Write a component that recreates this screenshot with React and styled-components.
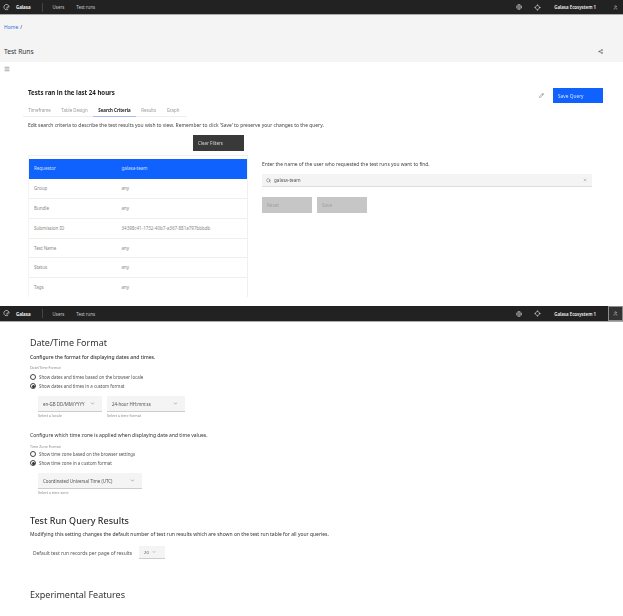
import React from "react";
import styled, { createGlobalStyle } from "styled-components";
import { Globe, Locate, User, Share2, Search, X, Pencil, Menu, ChevronDown } from "lucide-react";

const Global = createGlobalStyle`
  html, body { margin: 0; padding: 0; background: #fff; }
  body { font-family: "Noto Sans", "Open Sans", sans-serif; color: #161616; width: 623px; height: 616px; overflow: hidden; }
  * { box-sizing: border-box; }
`;

const Shot = styled.section`
  height: ${(p) => p.$h}px;
  overflow: hidden;
  display: flex;
  flex-direction: column;
  filter: blur(0.35px);
`;
const Header = styled.header`
  flex: none;
  height: ${(p) => p.$h}px;
  background: #222;
  border-bottom: 1px solid #aaa;
  display: flex;
  align-items: center;
  color: #c6c6c6;
  font-size: 4.4px;
  padding-left: 3px;
`;
const Logo = styled.svg`
  width: 7px;
  height: 7px;
  margin-right: 6px;
`;
const Brand = styled.span`
  color: #f4f4f4;
  font-weight: 700;
  margin-right: 11px;
`;
const Divider = styled.span`
  width: 1px;
  height: 9px;
  background: #444;
  margin-right: 10px;
`;
const NavLink = styled.span`
  margin-right: 12px;
`;
const Spacer = styled.span`
  flex: 1;
`;
const HeadIcon = styled.span`
  display: flex;
  color: #d0d0d0;
  margin-right: ${(p) => p.$mr}px;
`;
const Eco = styled.span`
  color: #f4f4f4;
  font-weight: 600;
  margin-right: 12px;
`;
const UserBox = styled.span`
  width: 15px;
  height: 100%;
  display: flex;
  align-items: center;
  justify-content: center;
  color: #d0d0d0;
  border: ${(p) => (p.$active ? "1px solid #8d8d8d" : "none")};
  background: ${(p) => (p.$active ? "#333" : "transparent")};
`;
const Banner = styled.div`
  flex: none;
  height: 47px;
  background: #f4f4f4;
  padding: 9px 20px 0 4px;
  display: flex;
  flex-direction: column;
`;
const Crumb = styled.div`
  font-size: 5px;
  line-height: 7px;
  color: #3a6fe0;
  span { color: #333; margin-left: 2px; }
`;
const TitleRow = styled.div`
  margin-top: 16px;
  display: flex;
  align-items: center;
  justify-content: space-between;
`;
const PageTitle = styled.h1`
  margin: 0;
  font-size: 6.6px;
  line-height: 9px;
  font-weight: 400;
  color: #333;
`;
const ShareIcon = styled.span`
  display: flex;
  color: #444;
`;
const Burger = styled.div`
  flex: none;
  height: 14px;
  padding: 4px 0 0 4px;
  color: #555;
  display: flex;
`;
const Content = styled.div`
  padding: 0 20px 0 28px;
`;
const QueryHead = styled.div`
  display: flex;
  align-items: flex-start;
  justify-content: space-between;
  height: 29px;
  padding-top: 12px;
`;
const QueryTitle = styled.h2`
  margin: 0;
  font-size: 6.1px;
  line-height: 10px;
  font-weight: 700;
  color: #222;
`;
const HeadActions = styled.div`
  display: flex;
  align-items: center;
  color: #555;
`;
const PrimaryBtn = styled.button`
  width: 50px;
  height: 15px;
  margin-left: 9px;
  background: #0f62fe;
  border: 0;
  color: #cfe0ff;
  font: 400 4.8px "Noto Sans", sans-serif;
  text-align: left;
  padding-left: 5px;
`;
const Tabs = styled.div`
  margin-left: -5px;
  display: flex;
  width: 164px;
  border-bottom: 1px solid #eee;
  height: 12px;
`;
const Tab = styled.span`
  font-size: 4.4px;
  line-height: 11px;
  padding: 0 5.3px;
  color: ${(p) => (p.$active ? "#222" : "#999")};
  font-weight: ${(p) => (p.$active ? 700 : 400)};
  height: 12px;
  border-bottom: 1px solid ${(p) => (p.$active ? "#a9bdf0" : "transparent")};
`;
const Lead = styled.p`
  margin: 5px 0 0;
  font-size: 4.95px;
  line-height: 7px;
  color: #444;
`;
const ClearRow = styled.div`
  margin-top: 6px;
  padding-left: 165px;
`;
const DarkBtn = styled.button`
  width: 51px;
  height: 16px;
  display: block;
  background: #393939;
  border: 0;
  color: #d8d8d8;
  font: 400 4.5px "Noto Sans", sans-serif;
  text-align: left;
  padding-left: 5px;
`;
const Columns = styled.div`
  margin-top: 4px;
  display: flex;
`;
const Table = styled.div`
  width: 220px;
  height: 142px;
  overflow: hidden;
  border-top: 1px solid #f0f0f0;
  border-left: 1px solid #f4f4f4;
  border-right: 1px solid #f0f0f0;
  padding-top: 3px;
`;
const Row = styled.div`
  height: 19.9px;
  display: flex;
  align-items: center;
  font-size: 4.5px;
  padding: 0 0 1px 5px;
  background: ${(p) => (p.$active ? "#0f62fe" : "#fff")};
  color: ${(p) => (p.$active ? "#cfe0ff" : "#888")};
  border-bottom: ${(p) => (p.$active ? "0" : "1px solid #eee")};
`;
const RowKey = styled.span`
  width: 87.5px;
`;
const Side = styled.div`
  margin-left: 14px;
  width: 330px;
  padding-top: 6px;
`;
const SideText = styled.p`
  margin: 0;
  font-size: 4.9px;
  line-height: 7px;
  color: #444;
`;
const SearchBox = styled.div`
  margin-top: 6px;
  height: 13px;
  background: #f4f4f4;
  border-bottom: 1px solid #ddd;
  display: flex;
  align-items: center;
  justify-content: space-between;
  padding: 0 5px 0 4px;
  color: #666;
  font-size: 4.6px;
`;
const SearchValue = styled.span`
  display: flex;
  align-items: center;
  gap: 3px;
  color: #555;
`;
const BtnRow = styled.div`
  margin-top: 10px;
  display: flex;
  gap: 5px;
`;
const GhostBtn = styled.button`
  width: 50px;
  height: 16px;
  background: #c6c6c6;
  border: 0;
  color: #a0a0a0;
  font: 400 4.6px "Noto Sans", sans-serif;
  text-align: left;
  padding-left: 5px;
`;
const Settings = styled.div`
  padding: 15px 0 0 30px;
`;
const H2 = styled.h2`
  margin: ${(p) => p.$mt || 0}px 0 0;
  font-size: 9px;
  line-height: 12px;
  font-weight: ${(p) => p.$w || 400};
  color: #333;
`;
const Strong = styled.p`
  margin: ${(p) => p.$mt}px 0 0;
  font-size: 5px;
  line-height: 7px;
  font-weight: ${(p) => p.$w || 500};
  color: #333;
`;
const Legend = styled.div`
  margin: ${(p) => p.$mt}px 0 ${(p) => p.$mb}px;
  font-size: 3.6px;
  line-height: 5px;
  color: #888;
`;
const RadioRow = styled.div`
  display: flex;
  align-items: center;
  height: 9.5px;
  font-size: 4.4px;
  color: #555;
`;
const Radio = styled.span`
  width: 6px;
  height: 6px;
  border-radius: 50%;
  border: 0.7px solid #444;
  margin-right: 3px;
  display: flex;
  align-items: center;
  justify-content: center;
  &::after {
    content: "";
    width: 3px;
    height: 3px;
    border-radius: 50%;
    background: ${(p) => (p.$on ? "#333" : "transparent")};
  }
`;
const Selects = styled.div`
  display: flex;
  gap: 5px;
  margin: 5px 0 0 8px;
`;
const Field = styled.div`
  width: ${(p) => p.$w}px;
`;
const Select = styled.div`
  height: 16px;
  background: #f4f4f4;
  border-bottom: 1px solid #ccc;
  display: flex;
  align-items: center;
  justify-content: space-between;
  padding: 0 7px 0 5px;
  font-size: 4.4px;
  color: #555;
`;
const Helper = styled.div`
  margin-top: 2px;
  font-size: 3.6px;
  line-height: 4px;
  color: #888;
`;
const InlineRow = styled.div`
  display: flex;
  align-items: center;
  margin: 8px 0 0 3px;
  font-size: 4.9px;
  color: #555;
`;
const SmallSelect = styled.div`
  margin-left: 7px;
  width: 26px;
  height: 13px;
  background: #f4f4f4;
  border-bottom: 1px solid #ccc;
  display: flex;
  align-items: center;
  gap: 3px;
  padding-left: 5px;
  font-size: 4.2px;
`;

const Top = ({ active, h }) => (
  <Header $h={h}>
    <Logo viewBox="0 0 16 16" fill="none" stroke="#d8d8d8" strokeWidth="1.6">
      <path d="M12 11.5A6 6 0 1 1 14 7H9v4" />
    </Logo>
    <Brand>Galasa</Brand>
    <Divider />
    <NavLink>Users</NavLink>
    <NavLink>Test runs</NavLink>
    <Spacer />
    <HeadIcon $mr={12}><Globe size={6} /></HeadIcon>
    <HeadIcon $mr={13}><Locate size={7} /></HeadIcon>
    <Eco>Galasa Ecosystem 1</Eco>
    <UserBox $active={active}><User size={5} /></UserBox>
  </Header>
);

const rows = [
  ["Requestor", "galasa-team", true],
  ["Group", "any"],
  ["Bundle", "any"],
  ["Submission ID", "34398c41-1732-40b7-a367-881a797bbbdb"],
  ["Test Name", "any"],
  ["Status", "any"],
  ["Tags", "any"],
];

export default function App() {
  return (
    <>
      <Global />
      <Shot $h={306}>
        <Top h={15} />
        <Banner>
          <Crumb>Home<span>/</span></Crumb>
          <TitleRow>
            <PageTitle>Test Runs</PageTitle>
            <ShareIcon><Share2 size={5} /></ShareIcon>
          </TitleRow>
        </Banner>
        <Burger><Menu size={6} /></Burger>
        <Content>
          <QueryHead>
            <QueryTitle>Tests ran in the last 24 hours</QueryTitle>
            <HeadActions>
              <Pencil size={5} />
              <PrimaryBtn>Save Query</PrimaryBtn>
            </HeadActions>
          </QueryHead>
          <Tabs>
            <Tab>Timeframe</Tab>
            <Tab>Table Design</Tab>
            <Tab $active>Search Criteria</Tab>
            <Tab>Results</Tab>
            <Tab>Graph</Tab>
          </Tabs>
          <Lead>Edit search criteria to describe the test results you wish to view. Remember to click 'Save' to preserve your changes to the query.</Lead>
          <ClearRow><DarkBtn>Clear Filters</DarkBtn></ClearRow>
          <Columns>
            <Table>
              {rows.map(([k, v, a]) => (
                <Row key={k} $active={a}><RowKey>{k}</RowKey><span>{v}</span></Row>
              ))}
            </Table>
            <Side>
              <SideText>Enter the name of the user who requested the test runs you want to find.</SideText>
              <SearchBox>
                <SearchValue><Search size={5} />galasa-team</SearchValue>
                <X size={4} />
              </SearchBox>
              <BtnRow>
                <GhostBtn>Reset</GhostBtn>
                <GhostBtn>Save</GhostBtn>
              </BtnRow>
            </Side>
          </Columns>
        </Content>
      </Shot>
      <Shot $h={310}>
        <Top h={16} active />
        <Settings>
          <H2>Date/Time Format</H2>
          <Strong $mt={5}>Configure the format for displaying dates and times.</Strong>
          <Legend $mt={4} $mb={2}>Date/Time Format</Legend>
          <RadioRow><Radio />Show dates and times based on the browser locale</RadioRow>
          <RadioRow><Radio $on />Show dates and times in a custom format</RadioRow>
          <Selects>
            <Field $w={64}>
              <Select>en-GB DD/MM/YYYY<ChevronDown size={5} /></Select>
              <Helper>Select a locale</Helper>
            </Field>
            <Field $w={78}>
              <Select>24-hour HH:mm:ss<ChevronDown size={5} /></Select>
              <Helper>Select a time format</Helper>
            </Field>
          </Selects>
          <Strong $mt={14} $w={400}>Configure which time zone is applied when displaying date and time values.</Strong>
          <Legend $mt={5} $mb={0}>Time Zone Format</Legend>
          <RadioRow><Radio />Show time zone based on the browser settings</RadioRow>
          <RadioRow><Radio $on />Show time zone in a custom format</RadioRow>
          <Selects>
            <Field $w={104}>
              <Select>Coordinated Universal Time (UTC)<ChevronDown size={5} /></Select>
              <Helper>Select a time zone</Helper>
            </Field>
          </Selects>
          <H2 $mt={20} $w={500}>Test Run Query Results</H2>
          <Strong $mt={4} $w={400}>Modifying this setting changes the default number of test run results which are shown on the test run table for all your queries.</Strong>
          <InlineRow>Default test run records per page of results<SmallSelect>20<ChevronDown size={4} /></SmallSelect></InlineRow>
          <H2 $mt={30}>Experimental Features</H2>
        </Settings>
      </Shot>
    </>
  );
}
